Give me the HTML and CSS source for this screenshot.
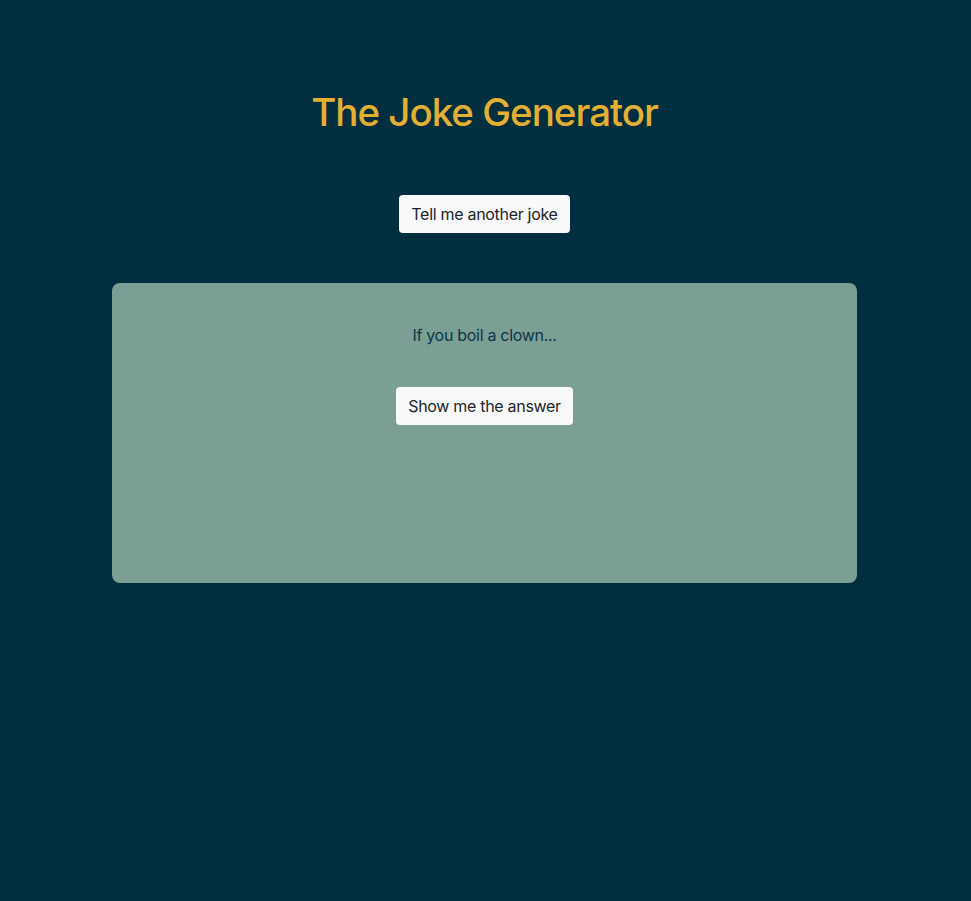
FILE: index.html
```html
<!DOCTYPE html>
<html lang="en">
<head>
<meta charset="utf-8">
<title>The Joke Generator</title>
<link rel="stylesheet" href="styles.css">
</head>
<body>
  <main class="page">
    <h1 class="title">The Joke Generator</h1>
    <button class="btn">Tell me another joke</button>
    <section class="card">
      <p class="setup">If you boil a clown...</p>
      <button class="btn">Show me the answer</button>
    </section>
  </main>
</body>
</html>
```
FILE: styles.css
```css
html, body {
  margin: 0;
  padding: 0;
  background: #022f40;
  height: 100%;
}
body {
  font-family: Inter, "Noto Sans", sans-serif;
  font-size: 16px;
  line-height: 1.5;
  color: #212529;
  letter-spacing: -0.3px;
}
.page {
  display: flex;
  flex-direction: column;
  align-items: center;
  padding-top: 88px;
  padding-right: 2px;
}
.title {
  margin: 0;
  font-size: 38.5px;
  line-height: 48px;
  font-weight: 500;
  letter-spacing: -1px;
  color: #e4b034;
}
.btn {
  font-family: inherit;
  font-size: 16px;
  line-height: 24px;
  letter-spacing: -0.3px;
  padding: 7px 12px;
  border: 0;
  border-radius: 4px;
  background: #f8f9fa;
  color: #212529;
  cursor: pointer;
  margin-top: 59px;
}
.card {
  box-sizing: border-box;
  width: 745px;
  height: 300px;
  margin-top: 50px;
  background: #7b9e95;
  border-radius: 8px;
  padding-top: 40px;
  display: flex;
  flex-direction: column;
  align-items: center;
}
.card .btn {
  margin-top: 40px;
}
.setup {
  margin: 0;
  color: #0b3645;
}
```
